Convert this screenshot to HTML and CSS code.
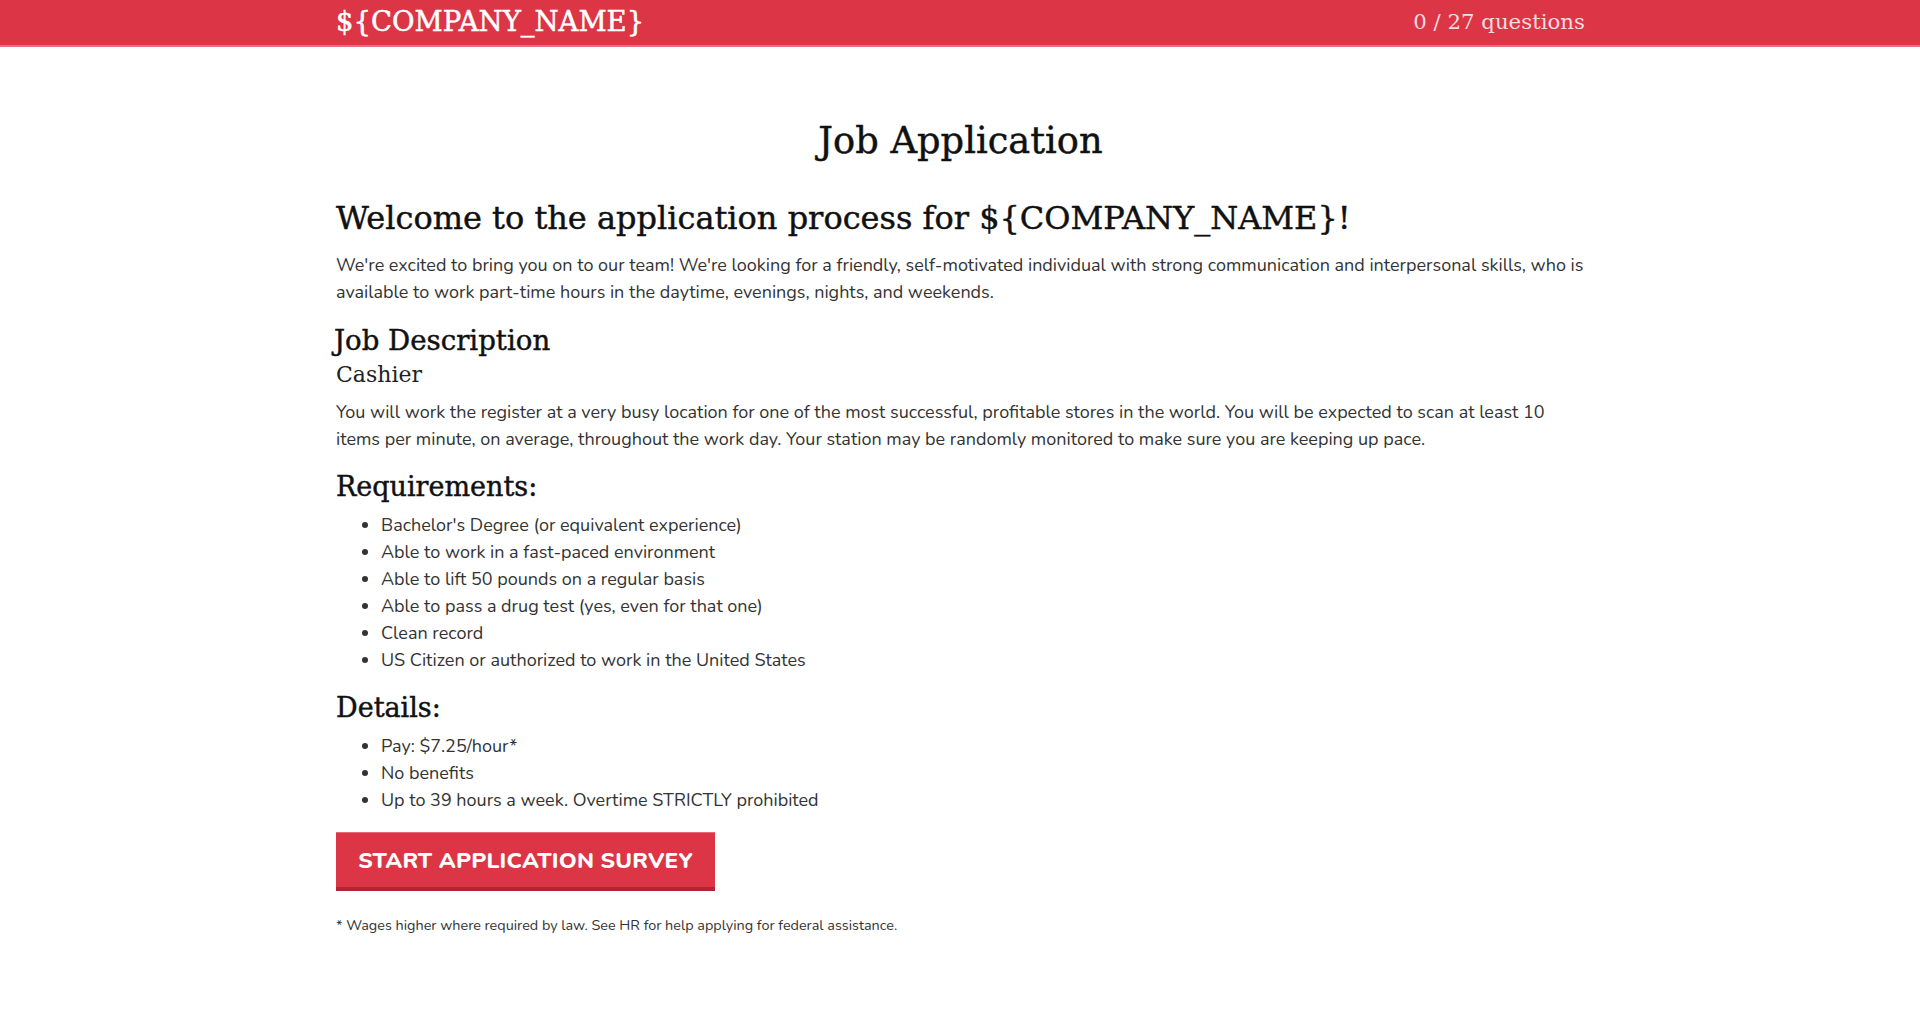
FILE: index.html
```html
<!DOCTYPE html>
<html lang="en">
<head>
<meta charset="utf-8">
<title>Job Application</title>
<link rel="stylesheet" href="styles.css">
</head>
<body>
<header class="topbar">
  <div class="container topbar-inner">
    <div class="brand">${COMPANY_NAME}</div>
    <div class="progress">0 / 27 questions</div>
  </div>
</header>
<main class="container content">
  <h1 class="page-title">Job Application</h1>
  <h2 class="welcome">Welcome to the application process for ${COMPANY_NAME}!</h2>
  <p class="text">We're excited to bring you on to our team! We're looking for a friendly, self-motivated individual with strong communication and interpersonal skills, who is available to work part-time hours in the daytime, evenings, nights, and weekends.</p>
  <h3 class="section-title jd">Job Description</h3>
  <div class="role">Cashier</div>
  <p class="text">You will work the register at a very busy location for one of the most successful, profitable stores in the world. You will be expected to scan at least 10 items per minute, on average, throughout the work day. Your station may be randomly monitored to make sure you are keeping up pace.</p>
  <h3 class="section-title">Requirements:</h3>
  <ul class="list">
    <li>Bachelor's Degree (or equivalent experience)</li>
    <li>Able to work in a fast-paced environment</li>
    <li>Able to lift 50 pounds on a regular basis</li>
    <li>Able to pass a drug test (yes, even for that one)</li>
    <li>Clean record</li>
    <li>US Citizen or authorized to work in the United States</li>
  </ul>
  <h3 class="section-title">Details:</h3>
  <ul class="list">
    <li>Pay: $7.25/hour*</li>
    <li>No benefits</li>
    <li>Up to 39 hours a week. Overtime STRICTLY prohibited</li>
  </ul>
  <button class="start-btn" type="button">START APPLICATION SURVEY</button>
  <p class="footnote">* Wages higher where required by law. See HR for help applying for federal assistance.</p>
</main>
</body>
</html>
```
FILE: styles.css
```css
* { box-sizing: border-box; }
body {
  margin: 0;
  background: #fff;
  color: #333;
  font-family: "Nunito", "Lato", "Open Sans", sans-serif;
}
.container {
  width: 1282px;
  margin: 0 auto;
  padding: 0 16px 0 17px;
}
.topbar {
  background: #dc3545;
  height: 47px;
  border-bottom: 2px solid #e8707c;
}
.topbar-inner {
  display: flex;
  justify-content: space-between;
  align-items: center;
  height: 45px;
}
.brand {
  font-family: "DejaVu Serif", serif;
  font-size: 27.5px;
  color: #fff;
  margin-top: -3px;
  -webkit-text-stroke: 0.5px #fff;
}
.progress {
  font-family: "DejaVu Serif", serif;
  font-size: 21.3px;
  color: #f3dde0;
  margin-top: -3px;
}
.page-title, .welcome, .section-title {
  -webkit-text-stroke: 0.45px #111;
}
.page-title {
  font-family: "DejaVu Serif", serif;
  font-weight: normal;
  font-size: 36.8px;
  color: #111;
  text-align: center;
  margin: 0;
  padding-top: 66px;
  line-height: 56px;
}
.welcome {
  font-family: "DejaVu Serif", serif;
  font-weight: normal;
  font-size: 32px;
  color: #111;
  margin: 27px 0 12px;
  line-height: 44px;
}
.text {
  font-size: 18px;
  line-height: 27px;
  margin: 0 0 10px;
}
.section-title {
  font-family: "DejaVu Serif", serif;
  font-weight: normal;
  font-size: 27px;
  color: #111;
  margin: 15px 0 6px;
  line-height: 38px;
}
.jd { margin: 16px 0 0 -2px; font-size: 27.6px; }
.role {
  font-family: "DejaVu Serif", serif;
  font-size: 22px;
  color: #222;
  line-height: 30px;
  margin-bottom: 9px;
}
.list {
  margin: 0 0 9px;
  padding-left: 45px;
  font-size: 18px;
  line-height: 27px;
}
.start-btn {
  display: block;
  margin-top: 18px;
  width: 379px;
  height: 59px;
  background: #dc3545;
  color: #fff;
  border: none;
  border-top: 1px solid #e56a76;
  border-bottom: 4px solid #b52431;
  font-family: "Nunito", "Lato", "Open Sans", sans-serif;
  font-weight: 800;
  font-size: 22.6px;
  letter-spacing: 0.2px;
  padding: 0;
}
.footnote {
  font-size: 14.4px;
  margin: 24px 0 0;
  color: #333;
}
```
